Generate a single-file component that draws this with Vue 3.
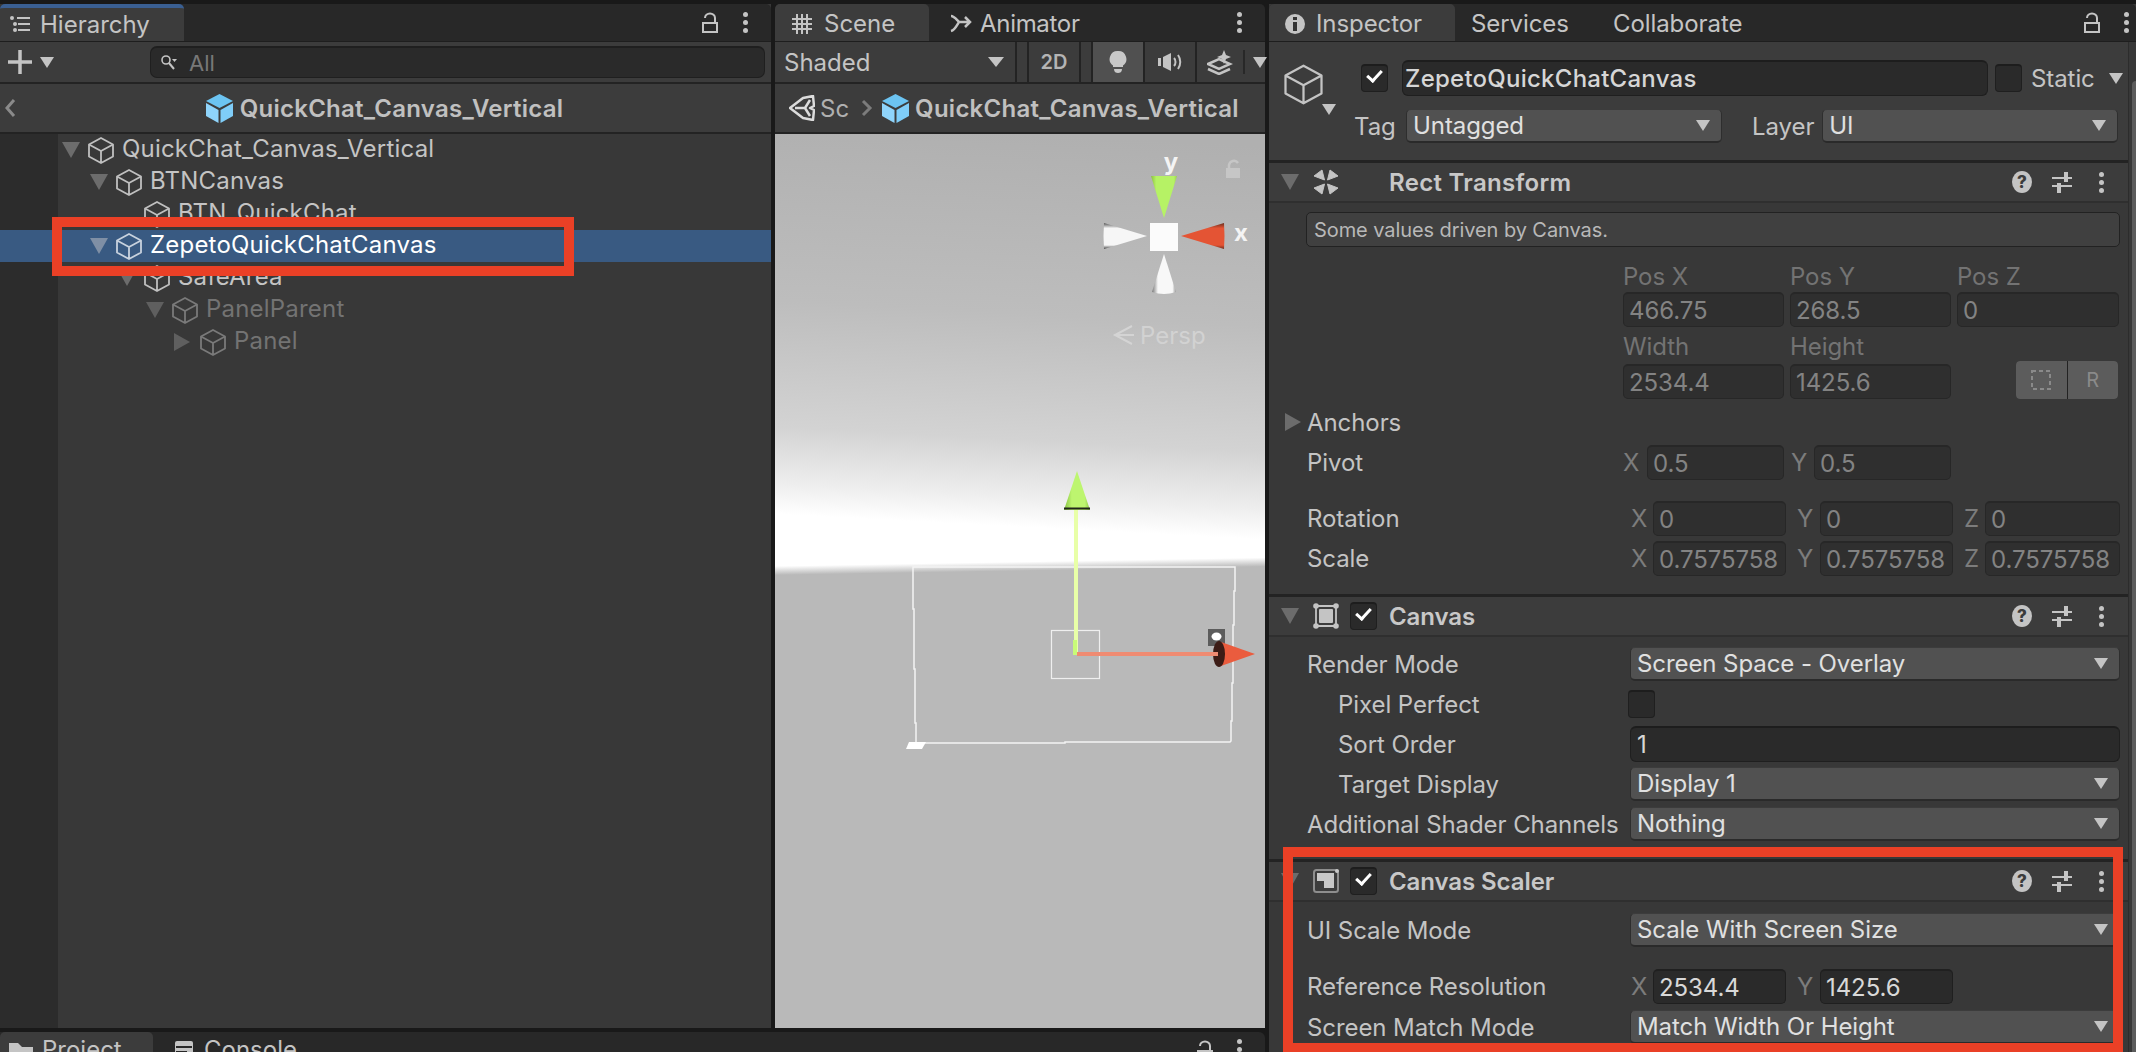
<script setup>
const cube = 'M13 1 L25 7.5 V19.5 L13 26 L1 19.5 V7.5 Z M1 7.5 L13 14 L25 7.5 M13 14 V26'
const sliders = 'M0 7h20M0 15h20'
const rows = [
  { label: 'QuickChat_Canvas_Vertical', depth: 0, arrow: 'down', cls: '' },
  { label: 'BTNCanvas', depth: 1, arrow: 'down', cls: '' },
  { label: 'BTN_QuickChat', depth: 2, arrow: '', cls: '' },
  { label: 'ZepetoQuickChatCanvas', depth: 1, arrow: 'down', cls: 'selected' },
  { label: 'SafeArea', depth: 2, arrow: 'down', cls: '' },
  { label: 'PanelParent', depth: 3, arrow: 'down', cls: 'dim' },
  { label: 'Panel', depth: 4, arrow: 'right', cls: 'dim' },
]
</script>

<template>
  <div class="app">
    <div class="top">
      <section class="panel hier">
        <header class="tabs">
          <div class="tab active blue" style="width:184px">
            <svg class="ic" width="22" height="20" viewBox="0 0 22 20"><g fill="#c4c4c4"><circle cx="3" cy="3" r="2" /><rect x="8" y="2" width="13" height="2" /><circle cx="6" cy="9" r="2" /><rect x="9" y="8" width="12" height="2" /><circle cx="6" cy="15" r="2" /><rect x="9" y="14" width="12" height="2" /></g></svg>
            <span>Hierarchy</span>
          </div>
          <div class="spacer"></div>
          <svg class="lock" width="16" height="22" viewBox="0 0 16 22"><path d="M3 6a5 4.500 0 0 1 10 0v5M1 11h14v9H1z" fill="none" stroke="#c4c4c4" stroke-width="2" /></svg>
          <div class="dots"><i></i><i></i><i></i></div>
        </header>
        <div class="toolbar htool">
          <svg width="26" height="26" viewBox="0 0 26 26"><path d="M13 1v24M1 13h24" stroke="#c4c4c4" stroke-width="3.5" /></svg>
          <i class="tri-d small"></i>
          <div class="search">
            <svg width="18" height="18" viewBox="0 0 18 18"><circle cx="6" cy="6" r="4" fill="none" stroke="#c4c4c4" stroke-width="1.6" /><path d="M9 9l5 6" stroke="#c4c4c4" stroke-width="2" /><path d="M12 5h5l-2.500 3z" fill="#c4c4c4" /></svg>
            <span>All</span>
          </div>
        </div>
        <div class="crumb center">
          <svg class="back" width="14" height="22" viewBox="0 0 14 22"><path d="M11 3L4 11l7 8" fill="none" stroke="#8a8a8a" stroke-width="3" /></svg>
          <div class="crumb-title">
            <svg width="27" height="29" viewBox="0 0 27 29"><path d="M13.500 0L27 7 13.500 14 0 7z" fill="#6cc4f2" /><path d="M0 9l12.500 7v13L0 22z" fill="#8fd4fb" /><path d="M27 9l-12.500 7v13L27 22z" fill="#7fcdf8" /></svg>
            <b>QuickChat_Canvas_Vertical</b>
          </div>
        </div>
        <div class="tree">
          <div class="gutter"></div>
          <div v-for="r in rows" :key="r.label" class="row" :class="r.cls" :style="{ paddingLeft: 62 + r.depth * 28 + 'px' }">
            <i class="arrow" :class="r.arrow"></i>
            <svg class="cube" width="26" height="27" viewBox="0 0 26 27"><path :d="cube" fill="none" stroke="currentColor" stroke-width="1.8" stroke-linejoin="round" /></svg>
            <span>{{ r.label }}</span>
          </div>
          <div class="redbox hl"></div>
        </div>
      </section>

      <section class="panel scene">
        <header class="tabs">
          <div class="tab active scene-tab">
            <svg class="ic" width="22" height="22" viewBox="0 0 22 22"><path d="M6 1v20M16 1v20M1 6h20M1 16h20M11 1v20M1 11h20" stroke="#c4c4c4" stroke-width="2" /></svg>
            <span>Scene</span>
          </div>
          <div class="tab anim-tab">
            <svg class="ic" width="22" height="20" viewBox="0 0 22 20"><path d="M1 2c3 0 5 3 8 6h11M15 3l5 5-5 5M9 8c-2 3-4 8-8 9" fill="none" stroke="#c4c4c4" stroke-width="2.500" /></svg>
            <span>Animator</span>
          </div>
          <div class="spacer"></div>
          <div class="dots"><i></i><i></i><i></i></div>
        </header>
        <div class="toolbar stool">
          <div class="seg shaded"><span>Shaded</span><i class="tri-d"></i></div>
          <div class="seg gap"></div>
          <div class="seg two"><b>2D</b></div>
          <div class="seg gap"></div>
          <div class="seg btn on"><svg width="18" height="24" viewBox="0 0 18 24"><path d="M9 1a8 8 0 0 1 5 14.500V17H4v-1.500A8 8 0 0 1 9 1zM5 19h8c0 3-2 4-4 4s-4-1-4-4z" fill="#c8c8c8" /></svg></div>
          <div class="seg btn"><svg width="26" height="22" viewBox="0 0 26 22"><path d="M1 7h3v8H1zM6 6l8-4v18l-8-4z" fill="#c4c4c4" /><path d="M17 7c2 2 2 6 0 8M21 4c3 4 3 10 0 14" fill="none" stroke="#c4c4c4" stroke-width="2" /></svg></div>
          <div class="seg fx"><svg width="26" height="26" viewBox="0 0 26 26"><path d="M1 15l11-5 11 5-11 5zM1 20l11 5 11-5" fill="none" stroke="#c4c4c4" stroke-width="2.500" /><path d="M17 1l2 5 5 2-5 2-2 5-2-5-5-2 5-2z" fill="#c4c4c4" /></svg><em></em><i class="tri-d small"></i></div>
        </div>
        <div class="crumb">
          <svg class="unity" width="26" height="26" viewBox="0 0 26 26"><path d="M1 13L14 3l10-2 1 10-4 2 4 2-1 10-10-2zM6 13h10l5-8M16 13l5 8" fill="none" stroke="#dcdcdc" stroke-width="2.500" stroke-linejoin="round" /></svg>
          <span class="sc">Sc</span>
          <svg class="chev" width="12" height="18" viewBox="0 0 12 18"><path d="M2 2l7 7-7 7" fill="none" stroke="#7c7c7c" stroke-width="3" /></svg>
          <svg width="27" height="29" viewBox="0 0 27 29"><path d="M13.500 0L27 7 13.500 14 0 7z" fill="#6cc4f2" /><path d="M0 9l12.500 7v13L0 22z" fill="#8fd4fb" /><path d="M27 9l-12.500 7v13L27 22z" fill="#7fcdf8" /></svg>
          <b>QuickChat_Canvas_Vertical</b>
        </div>
        <div class="view">
          <svg class="draw" width="490" height="894" viewBox="775 134 490 894">
            <defs>
              <linearGradient id="gr" x1="0" x2="1" y1="0" y2="0"><stop offset="0" stop-color="#8cc040" /><stop offset=".2" stop-color="#b6f265" /><stop offset=".88" stop-color="#b6f265" /><stop offset="1" stop-color="#9ad050" /></linearGradient>
              <linearGradient id="gr2" x1="0" x2="1" y1="0" y2="0"><stop offset="0" stop-color="#86c042" /><stop offset=".3" stop-color="#bdf56f" /><stop offset=".8" stop-color="#bdf56f" /><stop offset="1" stop-color="#8cc748" /></linearGradient>
              <linearGradient id="wl" x1="0" x2="0" y1="0" y2="1"><stop offset="0" stop-color="#555" /><stop offset=".2" stop-color="#f6f6f6" /><stop offset=".85" stop-color="#f6f6f6" /><stop offset="1" stop-color="#444" /></linearGradient>
              <linearGradient id="wb" x1="0" x2="1" y1="0" y2="0"><stop offset="0" stop-color="#777" /><stop offset=".25" stop-color="#f8f8f8" /><stop offset=".85" stop-color="#f8f8f8" /><stop offset="1" stop-color="#999" /></linearGradient>
              <linearGradient id="rd" x1="0" x2="0" y1="0" y2="1"><stop offset="0" stop-color="#6a2e1e" /><stop offset=".2" stop-color="#e45434" /><stop offset=".85" stop-color="#e45434" /><stop offset="1" stop-color="#6e2d1d" /></linearGradient>
            </defs>
            <path d="M1151 176h26l-13 42z" fill="url(#gr)" />
            <path d="M1104 223l43 13-43 13q-1-13 0-26z" fill="url(#wl)" />
            <path d="M1224 223l-43 13 43 13q1-13 0-26z" fill="url(#rd)" />
            <path d="M1164 254l12 38q-12 4-24 0z" fill="url(#wb)" />
            <rect x="1150" y="223" width="28" height="28" fill="#fbfbfb" />
            <path d="M1226 168h14v10h-14z" fill="#c6c6c6" />
            <path d="M1229 168v-3a5 5 0 0 1 9-2" fill="none" stroke="#c6c6c6" stroke-width="2.500" />
            <path d="M1132 326l-17 9 17 9M1115 335h19" fill="none" stroke="#d4d4d4" stroke-width="2" />
            <path d="M913 567h322v24l-1 0v34l-1 0v58h-1v38h-1v20l-1 1 H1065v1H916v-20h-1v-54h-1v-60h-1z" fill="none" stroke="#f4f4f4" stroke-width="1.500" />
            <rect x="1051.500" y="630.500" width="48" height="48" fill="none" stroke="#efefef" stroke-width="1.200" />
            <path d="M909 742h17l-4 7h-16z" fill="#fff" />
            <path d="M1076 510v145" stroke="#e8ffa8" stroke-width="4" />
            <path d="M1075 640v15" stroke="#c8fb78" stroke-width="4" />
            <path d="M1077 654h141" stroke="#ef8b72" stroke-width="4" />
            <path d="M1077 471l13 39h-26z" fill="url(#gr2)" />
            <path d="M1064 508.500h26" stroke="#20251b" stroke-width="2" />
            <rect x="1208" y="629" width="17" height="17" fill="#5c5c5c" />
            <ellipse cx="1216.500" cy="636.500" rx="5" ry="4" fill="#fff" />
            <path d="M1221 642l34 12-34 12z" fill="#ea5c3e" />
            <ellipse cx="1219" cy="654" rx="6" ry="13" fill="#3c1c16" />
            <path d="M1212 654h6" stroke="#ef8b72" stroke-width="4" />
            <text x="1171" y="170" class="axis" text-anchor="middle">y</text>
            <text x="1241" y="241" class="axis" text-anchor="middle">x</text>
            <text x="1140" y="344" class="persp">Persp</text>
          </svg>
        </div>
      </section>

      <section class="panel insp">
        <header class="tabs">
          <div class="tab active insp-tab">
            <svg class="ic" width="20" height="22" viewBox="0 0 20 22"><circle cx="10" cy="11" r="10" fill="#c4c4c4" /><rect x="8" y="9" width="4" height="9" fill="#333" /><rect x="8" y="4" width="4" height="3" fill="#333" /></svg>
            <span>Inspector</span>
          </div>
          <div class="tab plain" style="width:142px">Services</div>
          <div class="tab plain">Collaborate</div>
          <div class="spacer"></div>
          <svg class="lock" width="16" height="22" viewBox="0 0 16 22"><path d="M3 6a5 4.500 0 0 1 10 0v5M1 11h14v9H1z" fill="none" stroke="#c4c4c4" stroke-width="2" /></svg>
          <div class="dots"><i></i><i></i><i></i></div>
        </header>
        <div class="body">
          <div class="go">
            <svg class="go-cube" width="39" height="41" viewBox="0 0 26 27"><path :d="cube" fill="none" stroke="#c4c4c4" stroke-width="1.500" stroke-linejoin="round" /></svg>
            <i class="tri-d small go-tri"></i>
            <div class="go-main">
              <div class="go-line">
                <span class="check on"></span>
                <div class="name">ZepetoQuickChatCanvas</div>
                <span class="check"></span>
                <span class="static">Static</span><i class="tri-d small"></i>
              </div>
              <div class="go-line second">
                <span class="tag">Tag</span>
                <div class="drop tag-drop"><span>Untagged</span><i class="tri-d small"></i></div>
                <span class="layer">Layer</span>
                <div class="drop layer-drop"><span>UI</span><i class="tri-d small"></i></div>
              </div>
            </div>
          </div>

          <div class="comp-head">
            <i class="arrow down"></i>
            <svg class="cicon" width="26" height="26" viewBox="0 0 26 26"><path d="M1 7L9 1l2.500 10zM25 7L17 1l-2.500 10zM1 19l8 6 2.500-10zM25 19l-8 6-2.500-10z" fill="#c4c4c4" stroke="#c4c4c4" stroke-linejoin="round" /></svg>
            <b class="wide">Rect Transform</b>
            <span class="spacer"></span>
            <span class="help">?</span>
            <svg class="sl" width="20" height="22" viewBox="0 0 20 22"><path :d="sliders" stroke="#c4c4c4" stroke-width="2" /><path d="M14 1v10M7 12v10" stroke="#c4c4c4" stroke-width="4" /></svg>
            <div class="dots"><i></i><i></i><i></i></div>
          </div>
          <div class="rect-body">
            <div class="helpbox">Some values driven by Canvas.</div>
            <div class="tri-grid labels"><span>Pos X</span><span>Pos Y</span><span>Pos Z</span></div>
            <div class="tri-grid"><div class="field dis">466.75</div><div class="field dis">268.5</div><div class="field dis">0</div></div>
            <div class="tri-grid labels l2"><span>Width</span><span>Height</span></div>
            <div class="tri-grid">
              <div class="field dis">2534.4</div><div class="field dis">1425.6</div>
              <div class="rbtns"><span><svg width="22" height="22" viewBox="0 0 22 22"><rect x="2" y="2" width="18" height="18" fill="none" stroke="#8a8a8a" stroke-width="2" stroke-dasharray="4 3" /></svg></span><span>R</span></div>
            </div>
            <div class="prop anchors"><i class="arrow right"></i><span>Anchors</span></div>
            <div class="prop pivot"><span class="lbl">Pivot</span>
              <div class="xy"><span class="ax">X</span><div class="field dis">0.5</div><span class="ax">Y</span><div class="field dis">0.5</div></div>
            </div>
            <div class="prop rot"><span class="lbl">Rotation</span>
              <div class="xyz"><span class="ax">X</span><div class="field dis">0</div><span class="ax">Y</span><div class="field dis">0</div><span class="ax">Z</span><div class="field dis">0</div></div>
            </div>
            <div class="prop scale"><span class="lbl">Scale</span>
              <div class="xyz"><span class="ax">X</span><div class="field dis">0.7575758</div><span class="ax">Y</span><div class="field dis">0.7575758</div><span class="ax">Z</span><div class="field dis">0.7575758</div></div>
            </div>
          </div>

          <div class="comp-head">
            <i class="arrow down"></i>
            <svg class="cicon" width="26" height="26" viewBox="0 0 26 26"><path d="M3 3h20v20H3z" fill="none" stroke="#c4c4c4" stroke-width="1.800" /><rect x="6" y="6" width="14" height="14" rx="1" fill="#c4c4c4" /><circle cx="3" cy="3" r="2.800" fill="#c4c4c4" /><circle cx="23" cy="3" r="2.800" fill="#c4c4c4" /><circle cx="3" cy="23" r="2.800" fill="#c4c4c4" /><circle cx="23" cy="23" r="2.800" fill="#c4c4c4" /></svg>
            <span class="check on head-check"></span>
            <b>Canvas</b>
            <span class="spacer"></span>
            <span class="help">?</span>
            <svg class="sl" width="20" height="22" viewBox="0 0 20 22"><path :d="sliders" stroke="#c4c4c4" stroke-width="2" /><path d="M14 1v10M7 12v10" stroke="#c4c4c4" stroke-width="4" /></svg>
            <div class="dots"><i></i><i></i><i></i></div>
          </div>
          <div class="canvas-body">
            <div class="prop p40"><span class="lbl">Render Mode</span><div class="drop val"><span>Screen Space - Overlay</span><i class="tri-d small"></i></div></div>
            <div class="prop p40"><span class="lbl ind">Pixel Perfect</span><span class="check chk-val"></span></div>
            <div class="prop p40"><span class="lbl ind">Sort Order</span><div class="name val sort">1</div></div>
            <div class="prop p40"><span class="lbl ind">Target Display</span><div class="drop val"><span>Display 1</span><i class="tri-d small"></i></div></div>
            <div class="prop p40"><span class="lbl">Additional Shader Channels</span><div class="drop val"><span>Nothing</span><i class="tri-d small"></i></div></div>
          </div>

          <div class="comp-head">
            <i class="arrow down"></i>
            <svg class="cicon" width="26" height="24" viewBox="0 0 26 24"><rect x="1" y="1" width="24" height="22" rx="2.500" fill="none" stroke="#8e8e8e" stroke-width="2" /><path d="M4 4h17v15h-10v-7H4z" fill="#c8c8c8" /><circle cx="24" cy="2" r="2" fill="#c8c8c8" /></svg>
            <span class="check on head-check"></span>
            <b>Canvas Scaler</b>
            <span class="spacer"></span>
            <span class="help">?</span>
            <svg class="sl" width="20" height="22" viewBox="0 0 20 22"><path :d="sliders" stroke="#c4c4c4" stroke-width="2" /><path d="M14 1v10M7 12v10" stroke="#c4c4c4" stroke-width="4" /></svg>
            <div class="dots"><i></i><i></i><i></i></div>
          </div>
          <div class="scaler-body">
            <div class="prop p40"><span class="lbl">UI Scale Mode</span><div class="drop val"><span>Scale With Screen Size</span><i class="tri-d small"></i></div></div>
            <div class="prop refres"><span class="lbl">Reference Resolution</span>
              <div class="xyz two-only"><span class="ax">X</span><div class="field">2534.4</div><span class="ax">Y</span><div class="field">1425.6</div></div>
            </div>
            <div class="prop p40"><span class="lbl">Screen Match Mode</span><div class="drop val"><span>Match Width Or Height</span><i class="tri-d small"></i></div></div>
          </div>
          <div class="redbox hl2"></div>
        </div>
        <div class="scrollbar"></div>
      </section>
    </div>
    <div class="bottom">
      <div class="tab active project">
        <svg class="ic" width="26" height="22" viewBox="0 0 26 22"><path d="M1 3h9l4 4h11v15H1z" fill="#c4c4c4" /></svg>
        <span>Project</span>
      </div>
      <div class="tab console">
        <svg class="ic" width="20" height="22" viewBox="0 0 20 22"><path d="M1 3a2 2 0 0 1 2-2h14a2 2 0 0 1 2 2v17H1z" fill="#c4c4c4" /><path d="M2 7h16M2 12h11" stroke="#282828" stroke-width="2" /></svg>
        <span>Console</span>
      </div>
      <div class="spacer"></div>
      <svg class="lock" width="16" height="22" viewBox="0 0 16 22"><path d="M3 6a5 4.500 0 0 1 10 0v5M1 11h14v9H1z" fill="none" stroke="#c4c4c4" stroke-width="2" /></svg>
      <div class="dots"><i></i><i></i><i></i></div>
    </div>
  </div>
</template>

<style>
html, body { margin: 0; background: #191919; overflow: hidden; }
</style>

<style scoped>
.app { width: 2136px; height: 1052px; position: relative; overflow: hidden; background: #191919; font-family: Inter, "Liberation Sans", sans-serif; font-size: 24px; color: #c4c4c4; padding-top: 4px; box-sizing: border-box; }
.top { display: flex; height: 1024px; gap: 4px; }
.panel { display: flex; flex-direction: column; background: #383838; min-width: 0; }
.hier { width: 771px; }
.scene { width: 490px; background: #191919; }
.insp { width: 867px; height: 1048px; position: relative; letter-spacing: -.08px; }
.spacer { flex: 1; }
.tabs { height: 37px; flex: none; background: #282828; display: flex; align-items: center; border-bottom: 1px solid #1e1e1e; box-sizing: content-box; border-radius: 5px 5px 0 0; }
.tab { height: 100%; display: flex; align-items: center; box-sizing: border-box; white-space: nowrap; padding-top: 2px; }
.tab.active { background: #3c3c3c; border-radius: 5px 5px 0 0; }
.tab.blue { border-top: 4px solid #3a5f92; padding-left: 9px; padding-top: 0; }
.ic { margin-right: 9px; flex: none; }
.lock { margin-right: 25px; flex: none; }
.dots { display: flex; flex-direction: column; gap: 3px; margin-right: 23px; width: 5px; flex: none; }
.dots i { width: 5px; height: 5px; border-radius: 50%; background: #c4c4c4; }
.toolbar { height: 40px; flex: none; display: flex; background: #3c3c3c; border-bottom: 2px solid #232323; }
.htool { align-items: center; padding-left: 7px; box-sizing: content-box; }
.tri-d { width: 0; height: 0; border-left: 8px solid transparent; border-right: 8px solid transparent; border-top: 10px solid #c4c4c4; display: block; flex: none; }
.tri-d.small { border-left-width: 7px; border-right-width: 7px; border-top-width: 11px; }
.htool .tri-d { margin-left: 7px; }
.search { margin-left: 96px; width: 615px; height: 32px; border-radius: 7px; background: #2a2a2a; border: 1px solid #1f1f1f; border-top: 2px solid #1f1f1f; box-sizing: border-box; display: flex; align-items: center; padding-left: 9px; gap: 11px; color: #787878; font-size: 22px; }
.crumb { height: 48px; flex: none; background: #3c3c3c; display: flex; align-items: center; border-bottom: 2px solid #232323; border-top: 0; font-size: 24px; box-sizing: content-box; }
.crumb b { font-weight: 600; color: #c0c0c0; white-space: nowrap; letter-spacing: .25px; margin-left: 6px; }
.crumb.center { position: relative; justify-content: center; }
.back { position: absolute; left: 3px; }
.crumb-title { display: flex; align-items: center; gap: 1px; margin-left: -2px; }
.tree { flex: 1; position: relative; background: #383838; padding-top: 0; }
.gutter { position: absolute; left: 0; top: 0; bottom: 0; width: 58px; background: #2c2c2c; }
.row { position: relative; height: 32px; display: flex; align-items: center; white-space: nowrap; color: #c4c4c4; box-sizing: border-box; letter-spacing: .2px; }
.row span { margin-top: -3px; }
.row.selected { background: #395a82; color: #fff; }
.row.selected .arrow { border-top-color: #7f8fa5; }
.row.selected .cube { color: #c8d2de; }
.row.dim { color: #737373; }
.row.dim .arrow.down { border-top-color: #5f5f5f; }
.row.dim .arrow.right { border-left-color: #5f5f5f; }
.row .cube { color: #c0c0c0; margin: 0 8px 0 8px; flex: none; }
.row.dim .cube { color: #7a7a7a; }
.arrow { display: block; flex: none; width: 18px; height: 0; box-sizing: border-box; }
.arrow.down { width: 0; border-left: 9px solid transparent; border-right: 9px solid transparent; border-top: 16px solid #6c6c6c; }
.arrow.right { width: 0; border-top: 9px solid transparent; border-bottom: 9px solid transparent; border-left: 16px solid #6c6c6c; margin-right: 2px; }
.redbox { position: absolute; border: 10px solid #ea4026; box-sizing: border-box; pointer-events: none; }
.hl { left: 52px; top: 83px; width: 522px; height: 59px; }
.scene-tab { width: 154px; padding-left: 16px; }
.scene-tab .ic { margin-right: 11px; }
.anim-tab { padding-left: 21px; letter-spacing: -.3px; }
.anim-tab .ic { margin-right: 8px; }
.stool { gap: 2px; background: #232323; }
.seg { background: #3c3c3c; display: flex; align-items: center; justify-content: center; height: 100%; flex: none; }
.shaded { width: 240px; justify-content: space-between; padding: 0 9px; box-sizing: border-box; }
.shaded .tri-d { margin-right: 2px; border-left-width: 8px; border-right-width: 8px; border-top-width: 10px; }
.gap { width: 10px; }
.two { width: 50px; }
.two b { font-weight: 600; color: #b4b4b4; font-size: 20px; }
.btn { width: 50px; }
.btn.on { background: #505050; }
.fx { width: 68px; justify-content: flex-start; padding-left: 10px; box-sizing: border-box; }
.fx em { width: 2px; height: 24px; background: #282828; margin: 0 8px 0 10px; }
.fx .tri-d { margin-right: -10px; }
.crumb .unity { margin-left: 14px; }
.sc { margin-left: 5px; color: #b0b0b0; }
.chev { margin: 0 9px 0 12px; }
.view { flex: none; height: 894px; position: relative; background: linear-gradient(179deg, transparent 432px, #b9b9b9 441px), linear-gradient(183deg, #b0b0b0 12px, #bdbdbd 192px, #d3d3d3 318px, #eeeeee 375px, #ffffff 405px, #ffffff 100%); }
.draw { position: absolute; left: 0; top: 0; display: block; }
.axis { font: 700 24px Inter, sans-serif; fill: #f4f4f4; }
.persp { font: 400 24px Inter, sans-serif; fill: #d2d2d2; }
.insp-tab { width: 186px; padding-left: 16px; }
.insp-tab .ic { margin-right: 11px; }
.plain { padding-left: 16px; }
.insp .lock { margin-right: 24px; }
.insp .tabs .dots { margin-right: 7px; }
.body { flex: 1; position: relative; margin-right: 8px; }
.scrollbar { position: absolute; top: 38px; right: 0; bottom: 0; width: 7px; background: #383838; border-left: 1px solid #2c2c2c; }
.scrollbar::after { content: ""; position: absolute; left: 3px; right: 0; top: 39px; bottom: 0; background: #5c5c5c; border-radius: 4px 0 0 0; }
.go { height: 118px; border-bottom: 3px solid #232323; position: relative; background: #3c3c3c; box-sizing: content-box; }
.go-cube { position: absolute; left: 15px; top: 22px; }
.go-tri { position: absolute; left: 53px; top: 62px; }
.go-main { position: absolute; left: 0; top: 0; right: 0; }
.go-line { display: flex; align-items: center; }
.go-line:first-child { padding: 18px 0 0 92px; }
.second { padding: 13px 0 0 85px; }
.check { width: 27px; height: 28px; border-radius: 4px; background: #2a2a2a; border: 1px solid #1f1f1f; border-top: 2px solid #1d1d1d; box-sizing: border-box; display: block; position: relative; flex: none; }
.check.on::after { content: ""; position: absolute; left: 5px; top: 4px; width: 15px; height: 9px; transform: rotate(-48deg); border-left: 3px solid #fff; border-bottom: 3px solid #fff; box-sizing: border-box; }
.name { width: 586px; height: 36px; margin-left: 14px; box-sizing: border-box; background: #2a2a2a; border: 1px solid #1f1f1f; border-top: 2px solid #1d1d1d; border-radius: 6px; padding-left: 2px; font-weight: 500; color: #d6d6d6; display: flex; align-items: center; flex: none; letter-spacing: .25px; }
.go-line > .check:not(.on) { margin-left: 7px; }
.static { margin: 0 14px 0 9px; }
.tag { width: 52px; }
.drop { background: #515151; border: 1px solid #2e2e2e; border-top-color: #3c3c3c; border-bottom: 2px solid #2a2a2a; border-radius: 5px; height: 34px; box-sizing: border-box; display: flex; align-items: center; justify-content: space-between; padding: 0 11px 0 6px; color: #e0e0e0; flex: none; }
.tag-drop { width: 316px; }
.layer { margin: 0 8px 0 30px; }
.layer-drop { width: 296px; }
.comp-head { height: 38px; background: #3c3c3c; border-bottom: 2px solid #2f2f2f; display: flex; align-items: center; padding-left: 12px; box-sizing: content-box; }
.comp-head b { font-weight: 600; color: #c8c8c8; white-space: nowrap; margin-left: -1px; }
.comp-head .arrow { margin-right: 14px; }
.cicon { flex: none; margin-right: 11px; }
.comp-head .wide { margin-left: 39px; letter-spacing: .3px; }
.head-check { margin-right: 13px; }
.help { width: 20px; height: 22px; border-radius: 50%; background: #c4c4c4; color: #3c3c3c; font-size: 17px; font-weight: 800; text-align: center; line-height: 22px; flex: none; margin-right: 20px; }
.sl { flex: none; margin-right: 27px; }
.comp-head .dots { margin-right: 24px; }
.rect-body { height: 394px; border-bottom: 3px solid #232323; padding: 9px 0 0; box-sizing: border-box; }
.helpbox { margin-left: 37px; width: 814px; height: 35px; box-sizing: border-box; border: 1px solid #222; border-radius: 5px; background: #404040; font-size: 20px; padding-left: 7px; display: flex; align-items: center; color: #b8b8b8; }
.tri-grid { display: grid; grid-template-columns: 161px 161px 162px; gap: 6px; margin-left: 354px; width: 497px; }
.tri-grid.labels { margin-top: 15px; height: 30px; padding-bottom: 6px; box-sizing: border-box; color: #737373; align-items: center; }
.tri-grid.l2 { margin-top: 0; height: 37px; padding: 1px 0 0; }
.field { height: 35px; box-sizing: border-box; background: #2a2a2a; border: 1px solid #1f1f1f; border-top: 2px solid #202020; border-radius: 5px; padding-left: 5px; display: flex; align-items: center; color: #d6d6d6; white-space: nowrap; overflow: hidden; }
.field.dis { color: #838383; background: #2f2f2f; border-color: #272727; }
.rbtns { display: flex; width: 102px; height: 38px; margin: -3px 0 0 59px; gap: 1px; background: #232323; border-radius: 4px; overflow: hidden; }
.rbtns span { flex: 1; background: #5c5c5c; color: #8a8a8a; font-size: 20px; display: flex; align-items: center; justify-content: center; }
.prop { display: flex; align-items: center; padding-left: 38px; white-space: nowrap; }
.anchors { padding-left: 16px; height: 34px; margin-top: 6px; gap: 6px; }
.anchors .arrow { margin-right: 0; }
.pivot { height: 35px; margin-top: 6px; }
.rot { height: 35px; margin-top: 21px; }
.scale { height: 35px; margin-top: 5px; }
.lbl { width: 316px; flex: none; color: #c4c4c4; }
.lbl.ind { padding-left: 31px; box-sizing: border-box; }
.ax { color: #7c7c7c; flex: none; }
.xy { display: grid; grid-template-columns: 24px 137px 30px 137px; align-items: center; }
.xy .ax:nth-child(3) { padding-left: 7px; }
.xyz { display: grid; grid-template-columns: 22px 133px 34px 133px 32px 135px; align-items: center; margin-left: 8px; }
.xyz .ax:nth-child(n+3) { padding-left: 11px; }
.canvas-body { height: 225px; border-bottom: 3px solid #232323; padding-top: 7px; box-sizing: border-box; }
.p40 { height: 40px; }
.val { margin-left: 7px; width: 490px; }
.val.sort { height: 36px; padding-left: 6px; font-weight: 400; }
.chk-val { margin-left: 5px; }
.scaler-body { padding-top: 8px; }
.refres { height: 35px; margin-top: 19px; margin-bottom: 3px; }
.two-only { grid-template-columns: 22px 133px 34px 133px; }
.two-only .field { color: #d8d8d8; }
.hl2 { left: 14px; top: 805px; width: 840px; height: 206px; }
.bottom { height: 20px; position: absolute; left: 0; top: 1032px; width: 1265px; background: #282828; display: flex; align-items: flex-start; border-radius: 0 6px 0 0; overflow: hidden; }
.project { width: 153px; height: 100%; padding-left: 8px; padding-top: 0; align-items: flex-start; border-radius: 0 6px 0 0; }
.project .ic { margin: 8px 8px 0 0; }
.console { padding-left: 21px; padding-top: 0; align-items: flex-start; }
.console .ic { margin: 8px 10px 0 0; }
.bottom span { line-height: 28px; margin-top: 4px; }
.bottom .lock { margin: 8px 24px 0 0; }
.bottom .dots { margin: 7px 23px 0 0; }
</style>
